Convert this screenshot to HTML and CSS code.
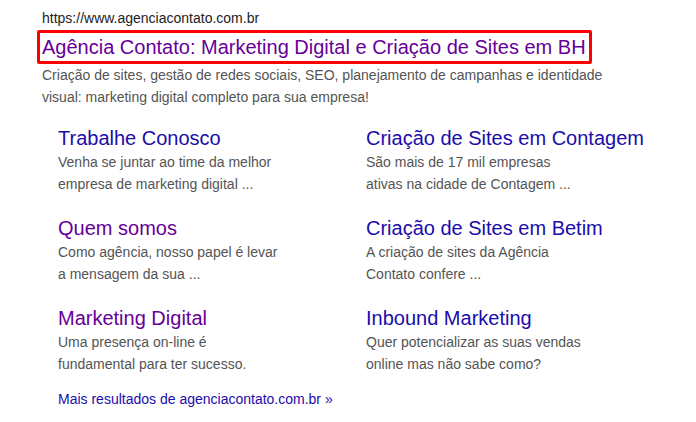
FILE: index.html
```html
<!DOCTYPE html>
<html lang="pt-BR">
<head>
    <meta charset="UTF-8">
    <meta name="viewport" content="width=device-width, initial-scale=1.0">
    <title>Agência Contato - resultado de busca</title>
    <link rel="stylesheet" href="styles.css">
</head>
<body>

<!-- Search result -->
<div class="result">
    <div class="result-url">https://www.agenciacontato.com.br</div>
    <a href="#" class="result-title visited">Agência Contato: Marketing Digital e Criação de Sites em BH</a>
    <div class="result-snippet">
        Criação de sites, gestão de redes sociais, SEO, planejamento de campanhas e identidade<br>
        visual: marketing digital completo para sua empresa!
    </div>

    <!-- Sitelinks -->
    <div class="sitelinks">
        <div class="sitelink">
            <a href="#" class="sitelink-title">Trabalhe Conosco</a>
            <div class="sitelink-desc">Venha se juntar ao time da melhor<br>empresa de marketing digital ...</div>
        </div>
        <div class="sitelink">
            <a href="#" class="sitelink-title">Criação de Sites em Contagem</a>
            <div class="sitelink-desc">São mais de 17 mil empresas<br>ativas na cidade de Contagem ...</div>
        </div>
        <div class="sitelink">
            <a href="#" class="sitelink-title visited">Quem somos</a>
            <div class="sitelink-desc">Como agência, nosso papel é levar<br>a mensagem da sua ...</div>
        </div>
        <div class="sitelink">
            <a href="#" class="sitelink-title">Criação de Sites em Betim</a>
            <div class="sitelink-desc">A criação de sites da Agência<br>Contato confere ...</div>
        </div>
        <div class="sitelink">
            <a href="#" class="sitelink-title visited">Marketing Digital</a>
            <div class="sitelink-desc">Uma presença on-line é<br>fundamental para ter sucesso.</div>
        </div>
        <div class="sitelink">
            <a href="#" class="sitelink-title">Inbound Marketing</a>
            <div class="sitelink-desc">Quer potencializar as suas vendas<br>online mas não sabe como?</div>
        </div>
    </div>

    <a href="#" class="more-results">Mais resultados de agenciacontato.com.br &raquo;</a>
</div>

</body>
</html>
```

FILE: styles.css
```css
/* Page */
body {
    margin: 0;
    background: #fff;
    font-family: Arial, "Liberation Sans", sans-serif;
}
a {
    text-decoration: none;
    color: #1a0dab;
}
a.visited {
    color: #660099;
}
/* Main result */
.result {
    padding: 8px 0 0 42px;
}
.result-url {
    font-size: 14px;
    line-height: 20px;
    color: #202124;
}
.result-title {
    display: inline-block;
    margin: 2px 0 0 -5px;
    padding: 0 3px 0 2px;
    border: 3px solid #ff0000;
    border-radius: 2px;
    font-size: 20px;
    line-height: 28px;
}
.result-snippet {
    font-size: 14px;
    line-height: 22px;
    color: #545454;
}
/* Sitelinks */
.sitelinks {
    display: grid;
    grid-template-columns: 308px 308px;
    row-gap: 20px;
    margin: 17px 0 0 16px;
}
.sitelink-title {
    display: block;
    font-size: 20px;
    line-height: 26px;
    white-space: nowrap;
}
.sitelink-desc {
    font-size: 14px;
    line-height: 22px;
    color: #545454;
}
.more-results {
    display: block;
    margin: 13px 0 0 16px;
    font-size: 14px;
    line-height: 22px;
}
```
